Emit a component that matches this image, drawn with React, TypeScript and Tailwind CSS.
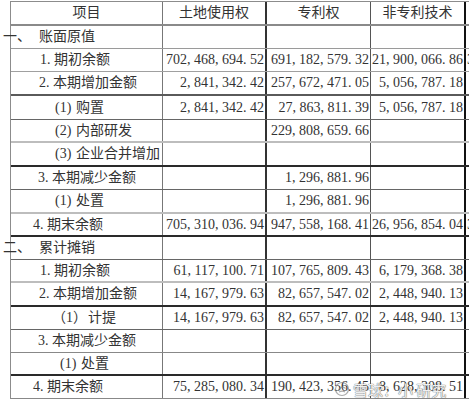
import React from "react";

type Row = {
  label?: React.ReactNode;
  pad?: string;
  v?: [string, string, string];
  tail?: string;
  h: string;
  line: string;
};

// SimSun gives the comma and the point a full half-width cell
function Num({ value }: { value: string }) {
  return (
    <span className="whitespace-nowrap">
      {value.split("").map((ch, i) =>
        ch === "," || ch === "." ? (
          <span key={i} className="inline-block w-[7px] text-left">
            {ch}
          </span>
        ) : (
          <span key={i}>{ch}</span>
        )
      )}
    </span>
  );
}

function Lbl({ pre, w, text }: { pre: string; w: string; text: string }) {
  return (
    <span className="whitespace-nowrap">
      <span className={`inline-block ${w}`}>{pre}</span>
      {text}
    </span>
  );
}

const rows: Row[] = [
  { label: <Lbl pre="一、" w="w-[36px]" text="账面原值" />, pad: "-ml-[8px]", h: "h-[23px]", line: "border-b border-[#9a9a9a]" },
  { label: <Lbl pre="1." w="w-[14px]" text="期初余额" />, pad: "pl-[29px]", v: ["702,468,694.52", "691,182,579.32", "21,900,066.86"], tail: "3", h: "h-[23px]", line: "border-b border-[#a0a0a0]" },
  { label: <Lbl pre="2." w="w-[14px]" text="本期增加金额" />, pad: "pl-[28px]", v: ["2,841,342.42", "257,672,471.05", "5,056,787.18"], h: "h-6", line: "border-b-2 border-[#5a5a5a]" },
  { label: <Lbl pre="(1)" w="w-[21px]" text="购置" />, pad: "pl-[44px]", v: ["2,841,342.42", "27,863,811.39", "5,056,787.18"], h: "h-6", line: "border-b border-[#666]" },
  { label: <Lbl pre="(2)" w="w-[21px]" text="内部研发" />, pad: "pl-[44px]", v: ["", "229,808,659.66", ""], h: "h-[23px]", line: "border-b-2 border-[#bdbdbd]" },
  { label: <Lbl pre="(3)" w="w-[21px]" text="企业合并增加" />, pad: "pl-[44px]", h: "h-6", line: "border-b-2 border-[#2a2a2a]" },
  { label: <Lbl pre="3." w="w-[14px]" text="本期减少金额" />, pad: "pl-[27px]", v: ["", "1,296,881.96", ""], h: "h-[23px]", line: "border-b border-[#666]" },
  { label: <Lbl pre="(1)" w="w-[21px]" text="处置" />, pad: "pl-[44px]", v: ["", "1,296,881.96", ""], h: "h-6", line: "border-b-2 border-[#bdbdbd]" },
  { label: <Lbl pre="4." w="w-[14px]" text="期末余额" />, pad: "pl-[22px]", v: ["705,310,036.94", "947,558,168.41", "26,956,854.04"], tail: "3", h: "h-[23px]", line: "border-b-2 border-[#2a2a2a]" },
  { label: <Lbl pre="二、" w="w-[36px]" text="累计摊销" />, pad: "-ml-[8px]", h: "h-[23px]", line: "border-b border-[#666]" },
  { label: <Lbl pre="1." w="w-[14px]" text="期初余额" />, pad: "pl-[29px]", v: ["61,117,100.71", "107,765,809.43", "6,179,368.38"], h: "h-[23px]", line: "border-b-2 border-[#bdbdbd]" },
  { label: <Lbl pre="2." w="w-[14px]" text="本期增加金额" />, pad: "pl-[28px]", v: ["14,167,979.63", "82,657,547.02", "2,448,940.13"], h: "h-6", line: "border-b-2 border-[#2a2a2a]" },
  { label: <Lbl pre="（1）" w="w-[36px]" text="计提" />, pad: "pl-[41px]", v: ["14,167,979.63", "82,657,547.02", "2,448,940.13"], h: "h-[23px]", line: "border-b border-[#666]" },
  { label: <Lbl pre="3." w="w-[14px]" text="本期减少金额" />, pad: "pl-[27px]", h: "h-[23px]", line: "border-b border-[#888]" },
  { label: <Lbl pre="(1)" w="w-[21px]" text="处置" />, pad: "pl-[49px]", h: "h-[23px]", line: "border-b-2 border-[#2a2a2a]" },
  { label: <Lbl pre="4." w="w-[14px]" text="期末余额" />, pad: "pl-[22px]", v: ["75,285,080.34", "190,423,356.45", "8,628,308.51"], h: "h-[23px]", line: "border-b border-[#888]" },
];

export default function App() {
  return (
    <div
      className="relative h-[400px] w-[469px] overflow-hidden bg-white pt-px text-[14px] leading-none text-[#333]"
      style={{ fontFamily: '"Liberation Serif", "Noto Sans CJK SC", serif' }}
    >
      <div className="ml-[10px] border-l border-t border-[#8c8c8c]">
        {/* header */}
        <div className="flex h-6 border-b-2 border-[#8a8a8a]">
          <div className="flex w-[152px] shrink-0 items-center justify-center border-r border-[#777]">项目</div>
          <div className="flex w-[104px] shrink-0 items-center justify-center border-r-2 border-[#333]">土地使用权</div>
          <div className="flex w-[104px] shrink-0 items-center justify-center border-r border-[#555]">专利权</div>
          <div className="flex w-[95px] shrink-0 items-center justify-center border-r-2 border-[#111]">非专利技术</div>
          <div className="flex-1" />
        </div>

        {rows.map((r, i) => (
          <div key={i} className={`flex ${r.h} ${r.line}`}>
            <div className="flex w-[152px] shrink-0 items-center border-r border-[#777]">
              <div className={r.pad}>{r.label}</div>
            </div>
            <div className="flex w-[104px] shrink-0 items-center justify-end border-r-2 border-[#333] pr-[1px]">
              {r.v && r.v[0] && <Num value={r.v[0]} />}
            </div>
            <div className="flex w-[104px] shrink-0 items-center justify-end border-r border-[#555] pr-[1px]">
              {r.v && r.v[1] && <Num value={r.v[1]} />}
            </div>
            <div className="flex w-[95px] shrink-0 items-center justify-end border-r-2 border-[#111] pr-[1px]">
              {r.v && r.v[2] && <Num value={r.v[2]} />}
            </div>
            <div className="flex flex-1 items-center pl-px">{r.tail}</div>
          </div>
        ))}
      </div>

      {/* watermark */}
      <div className="absolute bottom-[3px] left-[334px] flex items-center gap-[3px] text-[15px] text-white/90 [text-shadow:0_0_1px_#666,0_0_1px_#666]">
        <svg width="16" height="16" viewBox="0 0 16 16" fill="none" className="opacity-70">
          <circle cx="8" cy="8" r="6.5" stroke="#888" strokeWidth="1.2" />
          <path d="M4.5 9c1.5-3 5-3.5 7-1.5M5 11c2-1 4.5-1 6 0" stroke="#888" strokeWidth="1.1" />
        </svg>
        <span style={{ fontFamily: '"Noto Sans CJK SC", sans-serif' }}>雪球：小 研究</span>
      </div>
    </div>
  );
}
